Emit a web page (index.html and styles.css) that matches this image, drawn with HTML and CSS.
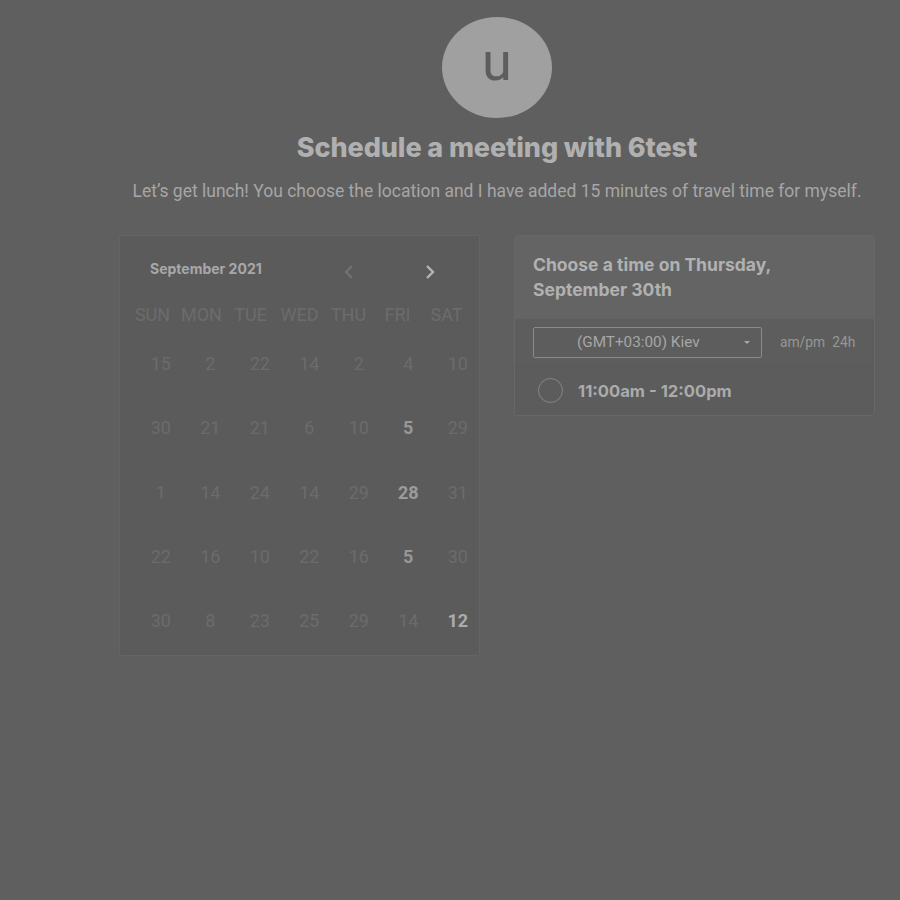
FILE: index.html
```html
<!DOCTYPE html>
<html>
<head>
<meta charset="utf-8">
<link rel="stylesheet" href="styles.css">
</head>
<body>
<div class="page">
  <div class="avatar"><span>u</span></div>
  <h1 class="title">Schedule a meeting with 6test</h1>
  <p class="subtitle">Let’s get lunch! You choose the location and I have added 15 minutes of travel time for myself.</p>
  <div class="content">
    <div class="calendar">
      <div class="cal-head">
        <span class="month">September 2021</span>
        <span class="nav prev"><svg width="10" height="16" viewBox="0 0 10 16"><path d="M8 2 L2 8 L8 14" fill="none" stroke="currentColor" stroke-width="2"/></svg></span>
        <span class="nav next"><svg width="10" height="16" viewBox="0 0 10 16"><path d="M2 2 L8 8 L2 14" fill="none" stroke="currentColor" stroke-width="2.4"/></svg></span>
      </div>
      <div class="weekdays">
        <span>SUN</span><span>MON</span><span>TUE</span><span>WED</span><span>THU</span><span>FRI</span><span>SAT</span>
      </div>
      <div class="dates">
        <span>15</span><span>2</span><span>22</span><span>14</span><span>2</span><span>4</span><span>10</span>
        <span>30</span><span>21</span><span>21</span><span>6</span><span>10</span><span class="av">5</span><span>29</span>
        <span>1</span><span>14</span><span>24</span><span>14</span><span>29</span><span class="av hi">28</span><span>31</span>
        <span>22</span><span>16</span><span>10</span><span>22</span><span>16</span><span class="av">5</span><span>30</span>
        <span>30</span><span>8</span><span>23</span><span>25</span><span>29</span><span>14</span><span class="av top">12</span>
      </div>
    </div>
    <div class="times">
      <div class="times-head">Choose a time on Thursday,<br>September 30th</div>
      <div class="tz-row">
        <div class="tz-select"><span>(GMT+03:00) Kiev</span><i class="caret"></i></div>
        <div class="fmt"><span>am/pm</span><span>24h</span></div>
      </div>
      <div class="slot">
        <span class="radio"></span>
        <span class="slot-text">11:00am - 12:00pm</span>
      </div>
    </div>
  </div>
</div>
</body>
</html>
```
FILE: styles.css
```css
html, body {
  margin: 0;
  padding: 0;
  background: #5f5f5f;
}
body {
  font-family: Roboto, "Liberation Sans", sans-serif;
  width: 900px;
  height: 900px;
  overflow: hidden;
}
.page {
  padding: 17px 0 0 94px;
  display: flex;
  flex-direction: column;
  align-items: center;
}
.avatar {
  width: 110px;
  height: 101px;
  border-radius: 50%;
  background: #a0a0a0;
  display: flex;
  align-items: center;
  justify-content: center;
}
.avatar span {
  font-family: Roboto, sans-serif;
  font-size: 54px;
  color: #5d5d5d;
  line-height: 1;
  margin-top: -12px;
}
.title {
  margin: 15px 0 0;
  font-family: Inter, sans-serif;
  font-weight: 800;
  font-size: 27px;
  line-height: 30px;
  color: #b0b0b0;
  letter-spacing: -0.1px;
}
.subtitle {
  margin: 18px 0 0;
  font-size: 17.5px;
  line-height: 20px;
  color: #a6a6a6;
}
.content {
  margin-top: 34px;
  width: 756px;
  display: flex;
  align-items: flex-start;
  gap: 34px;
}
.calendar {
  background: #5b5b5b;
  border: 1px solid #646464;
  border-radius: 2px;
  padding: 0 8px;
  box-sizing: border-box;
  width: 361px;
  height: 421px;
}
.cal-head {
  display: flex;
  align-items: center;
  height: 32px;
  margin-top: 20px;
}
.month {
  margin-left: 22px;
  font-family: Inter, sans-serif;
  font-weight: 700;
  font-size: 14px;
  color: #a8a8a8;
  margin-top: -8px;
}
.nav {
  display: flex;
  align-items: center;
}
.prev {
  margin-left: 82px;
  color: #747474;
}
.next {
  margin-left: 71px;
  color: #b4b4b4;
}
.weekdays {
  display: grid;
  grid-template-columns: repeat(7, 49px);
  margin-top: 14px;
  height: 24px;
  align-items: center;
}
.weekdays span {
  text-align: center;
  font-size: 18px;
  color: #6c6c6c;
}
.dates {
  display: grid;
  grid-template-columns: repeat(7, 49.5px);
  grid-auto-rows: 64.25px;
  margin-left: 8px;
  margin-top: 23px;
}
.dates span {
  text-align: center;
  font-size: 18px;
  color: #6b6b6b;
  line-height: 30px;
}
.dates .av {
  color: #979797;
  font-weight: 700;
}
.dates .hi {
  color: #9c9c9c;
}
.dates .top {
  color: #acacac;
}
.times {
  width: 361px;
  border: 1px solid #676767;
  border-radius: 3px;
  box-sizing: border-box;
  overflow: hidden;
  background: #5c5c5c;
}
.times-head {
  background: #646464;
  padding: 16px 18px 17px;
  font-family: Inter, sans-serif;
  font-weight: 700;
  font-size: 17.5px;
  line-height: 25px;
  color: #b1b1b1;
}
.tz-row {
  display: flex;
  align-items: center;
  height: 46px;
  padding: 0 18px;
  background: #5d5d5d;
  border-bottom: 1px solid #5a5a5a;
}
.tz-select {
  width: 229px;
  height: 31px;
  box-sizing: border-box;
  border: 1px solid #8a8a8a;
  border-radius: 2px;
  display: flex;
  align-items: center;
  padding-left: 43px;
  padding-right: 11px;
}
.tz-select span {
  flex: 1;
  font-size: 15.3px;
  color: #a6a6a6;
}
.caret {
  width: 0;
  height: 0;
  border-left: 3.5px solid transparent;
  border-right: 3.5px solid transparent;
  border-top: 3.5px solid #a8a8a8;
}
.fmt {
  margin-left: 18px;
  display: flex;
  gap: 7px;
  font-size: 13.8px;
  color: #979797;
}
.slot {
  display: flex;
  align-items: center;
  height: 49px;
  padding-left: 23px;
}
.radio {
  width: 25px;
  height: 25px;
  box-sizing: border-box;
  border: 1.5px solid #868686;
  border-radius: 50%;
}
.slot-text {
  margin-left: 15px;
  font-family: Inter, sans-serif;
  font-weight: 700;
  font-size: 16.6px;
  color: #ababab;
}
```
